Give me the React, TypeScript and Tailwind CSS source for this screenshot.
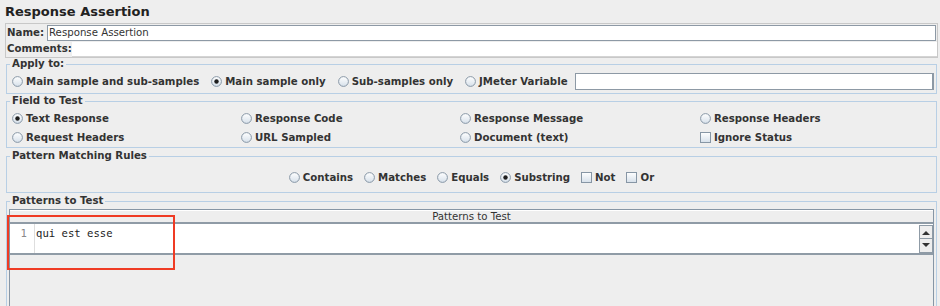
import React from 'react';

function Radio({ checked }: { checked?: boolean }) {
  return (
    <svg width="11" height="11" viewBox="0 0 11 11" className="shrink-0">
      <defs>
        <linearGradient id="radioFill" x1="0" y1="0" x2="0" y2="1">
          <stop offset="0" stopColor="#ffffff" />
          <stop offset="1" stopColor="#d6e0ea" />
        </linearGradient>
      </defs>
      <circle cx="5.5" cy="5.5" r="4.9" fill="url(#radioFill)" stroke="#8796a5" strokeWidth="1" />
      {checked && <circle cx="5.5" cy="5.5" r="2.2" fill="#1e1e1e" />}
    </svg>
  );
}

function Check() {
  return (
    <svg width="11" height="11" viewBox="0 0 11 11" className="shrink-0">
      <defs>
        <linearGradient id="checkFill" x1="0" y1="0" x2="0" y2="1">
          <stop offset="0" stopColor="#ffffff" />
          <stop offset="1" stopColor="#d6e0ea" />
        </linearGradient>
      </defs>
      <rect x="0.5" y="0.5" width="10" height="10" fill="url(#checkFill)" stroke="#8796a5" />
    </svg>
  );
}

function Option({ label, checked, box }: { label: string; checked?: boolean; box?: boolean }) {
  return (
    <label className="flex items-center gap-[3px] whitespace-nowrap">
      {box ? <Check /> : <Radio checked={checked} />}
      <span>{label}</span>
    </label>
  );
}

function Group({ title, className, children }: { title: string; className?: string; children: React.ReactNode }) {
  return (
    <fieldset className={`border border-[#b8cfe5] ${className ?? ''}`}>
      <legend className="ml-[3px] px-[2px] leading-[14px] font-bold text-[#333333]">{title}</legend>
      {children}
    </fieldset>
  );
}

export default function App() {
  return (
    <div className="relative h-[306px] w-[940px] overflow-hidden bg-[#eeeeee] font-['DejaVu_Sans',sans-serif] text-[10.2px] text-[#333333]">
      <div className="flex h-[23px] items-center pl-[5px] text-[13px] font-bold text-[#222222]">Response Assertion</div>

      <div className="ml-[5px] mr-[2px] flex h-[35px] flex-col border border-[#c8c8c8]">
        <div className="flex h-[17px] items-center pl-[1px]">
          <span className="font-bold">Name:</span>
          <div className="ml-[3px] mr-[1px] flex h-[16px] flex-1 items-center border border-[#8d99a5] bg-white pl-[1px]">Response Assertion</div>
        </div>
        <div className="flex h-[16px] items-center pl-[1px]">
          <span className="font-bold">Comments:</span>
          <div className="h-[15px] flex-1 border-b border-[#d4d4d4] bg-white" />
        </div>
      </div>

      <fieldset className="ml-[6px] mr-[3px] border border-[#b8cfe5] pb-[3px] pt-[3px]">
        <legend className="ml-[3px] px-[2px] leading-[12px] font-bold text-[#333333]">Apply to:</legend>
        <div className="flex h-[17px] items-center gap-[12px] px-[5px] font-bold">
          <Option label="Main sample and sub-samples" />
          <Option label="Main sample only" checked />
          <Option label="Sub-samples only" />
          <Option label="JMeter Variable" />
          <div className="-ml-[5px] mr-[-3px] h-[17px] flex-1 border border-[#8d99a5] border-r-2 bg-white" />
        </div>
      </fieldset>

      <Group title="Field to Test" className="ml-[6px] mr-[3px] pt-[1px]">
        <div className="grid grid-cols-[229px_219px_240px_1fr] px-[5px] font-bold">
          {[
            ['Text Response', true],
            ['Response Code'],
            ['Response Message'],
            ['Response Headers'],
            ['Request Headers'],
            ['URL Sampled'],
            ['Document (text)'],
          ].map(([l, c]) => (
            <div key={l as string} className="flex h-[19px] items-center">
              <Option label={l as string} checked={!!c} />
            </div>
          ))}
          <div className="flex h-[19px] items-center">
            <Option label="Ignore Status" box />
          </div>
        </div>
      </Group>

      <Group title="Pattern Matching Rules" className="ml-[6px] mr-[3px] mt-[1px] pb-[5px] pt-[5px]">
        <div className="flex h-[19px] items-center justify-center gap-[11px] font-bold">
          <Option label="Contains" />
          <Option label="Matches" />
          <Option label="Equals" />
          <Option label="Substring" checked />
          <Option label="Not" box />
          <Option label="Or" box />
        </div>
      </Group>

      <Group title="Patterns to Test" className="ml-[6px] mr-[3px] mt-[1px] h-[140px] pt-[1px]">
        <div className="mx-[2px] flex h-[120px] flex-col border-x border-t border-[#8796a5]">
          <div className="flex h-[14px] items-center justify-center border-b-2 border-t border-b-[#8f9ba6] border-t-white bg-[#eeeeee] leading-[12px]">
            Patterns to Test
          </div>
          <div className="flex h-[31px] border-b-2 border-[#8f9ba6] bg-white">
            <div className="w-[25px] border-r border-[#dedede] pr-[7px] pt-[3px] text-right font-['DejaVu_Sans_Mono',monospace] text-[10.6px] leading-[12px] text-[#8a8a8a]">1</div>
            <div className="flex-1 pl-[1px] pt-[3px] font-['DejaVu_Sans_Mono',monospace] text-[10.6px] leading-[12px] text-[#222222]">qui est esse</div>
            <div className="flex w-[14px] flex-col pt-[1px]">
              <div className="flex h-[14px] items-center justify-center border border-[#8f9ba6] bg-[#eeeeee]">
                <svg width="8" height="5" viewBox="0 0 8 5"><path d="M0 5 L4 1 L8 5 Z" fill="#333" /></svg>
              </div>
              <div className="flex h-[14px] items-center justify-center border border-t-0 border-[#8f9ba6] bg-[#eeeeee]">
                <svg width="8" height="5" viewBox="0 0 8 5"><path d="M0 0 L8 0 L4 4 Z" fill="#333" /></svg>
              </div>
            </div>
          </div>
          <div className="flex-1 bg-[#eeeeee]" />
        </div>
      </Group>

      <div className="absolute left-[7px] top-[215px] h-[55px] w-[168px] border-2 border-[#ef3b24]" />
    </div>
  );
}
